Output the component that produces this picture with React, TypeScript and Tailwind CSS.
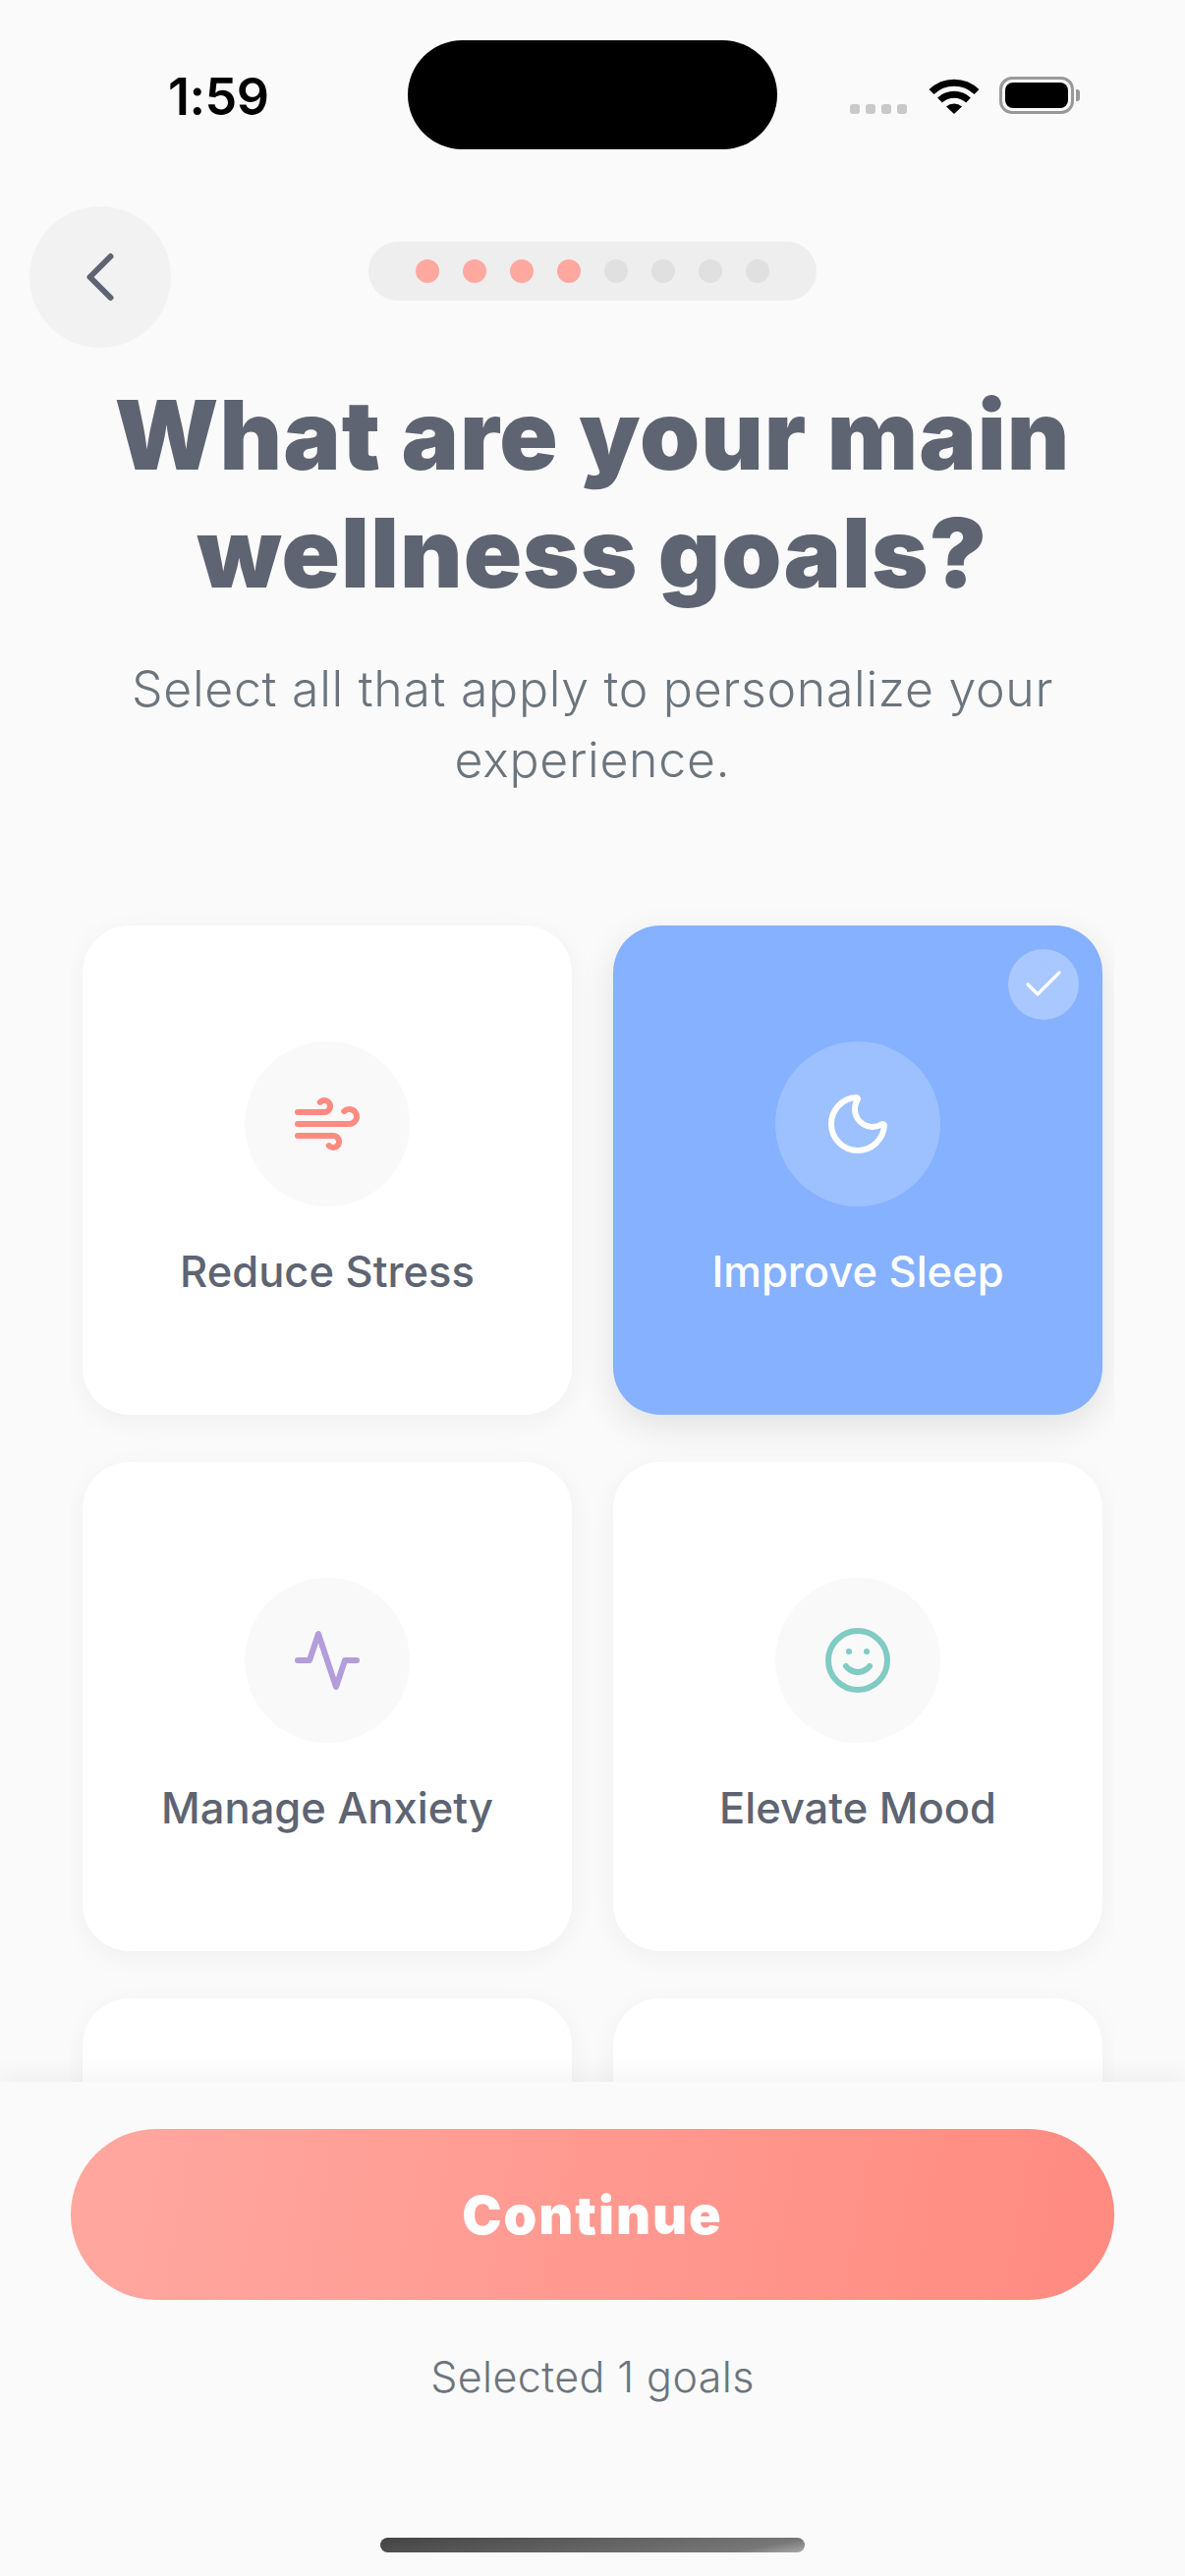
import { Check, ChevronLeft, Moon, Smile } from "lucide-react";
import { FiActivity, FiWind } from "react-icons/fi";
import type { ReactNode } from "react";

const SANS = "font-['Inter','Noto_Sans',sans-serif]";

function StatusBar() {
  return (
    <div className="relative h-[210px] shrink-0">
      <span className="absolute left-[171px] top-[70px] text-[52px] leading-[58px] font-semibold tracking-[-0.5px] text-black">1:59</span>
      {/* dynamic island */}
      <div className="absolute left-[415px] top-[41px] h-[111px] w-[376px] rounded-[56px] bg-black" />
      <div className="absolute left-[865px] top-[78px] flex h-[38px] items-end gap-[6px]">
        {[0, 1, 2, 3].map((i) => (
          <span key={i} className="h-[10px] w-[10px] rounded-[3px] bg-[#c9c9c9]" />
        ))}
        <svg width="52" height="38" viewBox="0 0 52 38" className="ml-[16px]">
          <path d="M3 15.5A33 33 0 0 1 49 15.5" fill="none" stroke="#000" strokeWidth="7" />
          <path d="M11.5 24A21.5 21.5 0 0 1 40.5 24" fill="none" stroke="#000" strokeWidth="7" />
          <path d="M18 30.5a12 12 0 0 1 16 0L26 38z" fill="#000" />
        </svg>
        <div className="ml-[14px] flex items-center">
          <div className="h-[38px] w-[76px] rounded-[13px] border-[3px] border-[#999999] p-[3px]">
            <div className="h-full w-full rounded-[8px] bg-black" />
          </div>
          <div className="ml-[2px] h-[12px] w-[4px] rounded-r-[3px] bg-[#999999]" />
        </div>
      </div>
    </div>
  );
}

function ProgressDots() {
  return (
    <div className="mt-[36px] flex h-[60px] items-center gap-[24px] rounded-[30px] bg-[#eeeeee] px-[48px]">
      {[0, 1, 2, 3, 4, 5, 6, 7].map((i) => (
        <span key={i} className={`h-[24px] w-[24px] rounded-full ${i < 4 ? "bg-[#ffa8a0]" : "bg-[#e0e0e0]"}`} />
      ))}
    </div>
  );
}

interface GoalCardProps {
  label?: string;
  icon?: ReactNode;
  selected?: boolean;
}

function GoalCard({ label, icon, selected }: GoalCardProps) {
  return (
    <div
      className={`relative flex h-[498px] flex-col items-center rounded-[48px] pt-[118px] ${
        selected
          ? "bg-[#85b1ff] shadow-[0_12px_36px_rgba(0,0,0,0.1)]"
          : "bg-white shadow-[0_6px_30px_rgba(0,0,0,0.045)]"
      }`}
    >
      {selected && (
        <div className="absolute right-[24px] top-[24px] flex h-[72px] w-[72px] items-center justify-center rounded-full bg-white/30">
          <Check size={48} strokeWidth={1.6} color="#ffffff" />
        </div>
      )}
      {icon && (
        <div className={`flex h-[168px] w-[168px] items-center justify-center rounded-full ${selected ? "bg-white/20" : "bg-[#f9f9f9]"}`}>
          {icon}
        </div>
      )}
      {label && (
        <p className={`mt-[40px] text-[43.5px] leading-[52px] font-medium ${selected ? "text-white" : "text-[#5e6472]"}`}>{label}</p>
      )}
    </div>
  );
}

export default function App() {
  return (
    <div className={`${SANS} relative flex h-[2622px] w-[1206px] flex-col overflow-hidden bg-[#fafafa]`}>
      <StatusBar />

      <div className="relative flex h-[144px] shrink-0 justify-center">
        <button className="absolute left-[30px] top-0 flex h-[144px] w-[144px] items-center justify-center rounded-full bg-[#f2f2f2]">
          <ChevronLeft size={84} strokeWidth={1.7} color="#5e6472" />
        </button>
        <ProgressDots />
      </div>

      <div className="shrink-0 px-[60px] text-center">
        <h1 className="mt-[29px] text-[98px] leading-[120px] font-black tracking-[1px] text-[#5e6472]">
          What are your main
          <br />
          wellness goals?
        </h1>
        <p className="mt-[42px] text-[50px] leading-[72px] font-[350] tracking-[0.7px] text-[#6c757d]">
          Select all that apply to personalize your
          <br />
          experience.
        </p>
      </div>

      <div className="mx-[72px] mt-[96px] min-h-0 flex-1 overflow-hidden px-[12px] pt-[37px]">
        <div className="grid grid-cols-2 gap-x-[42px] gap-y-[48px]">
          <GoalCard label="Reduce Stress" icon={<FiWind size={72} color="#ff8a80" />} />
          <GoalCard selected label="Improve Sleep" icon={<Moon size={72} strokeWidth={2} color="#ffffff" />} />
          <GoalCard label="Manage Anxiety" icon={<FiActivity size={72} color="#b39ddb" />} />
          <GoalCard label="Elevate Mood" icon={<Smile size={72} strokeWidth={2} color="#80cbc4" />} />
          <GoalCard />
          <GoalCard />
        </div>
      </div>

      <div className="relative flex h-[503px] shrink-0 flex-col items-center bg-[#fafafa] pt-[48px] shadow-[0_-6px_24px_rgba(0,0,0,0.05)]">
        <button className="flex h-[174px] w-[1062px] items-center justify-center rounded-[87px] bg-[linear-gradient(100deg,#ffa8a0,#ff8a80)] text-[54px] font-black tracking-[2px] text-white">
          Continue
        </button>
        <p className="mt-[52px] text-[43px] leading-[52px] font-[350] tracking-[0.4px] text-[#6c757d]">Selected 1 goals</p>
        <div className="absolute left-[387px] top-[464px] h-[15px] w-[432px] rounded-[8px] bg-[linear-gradient(170deg,#444444,#777777_85%,#aaaaaa)]" />
      </div>
    </div>
  );
}
